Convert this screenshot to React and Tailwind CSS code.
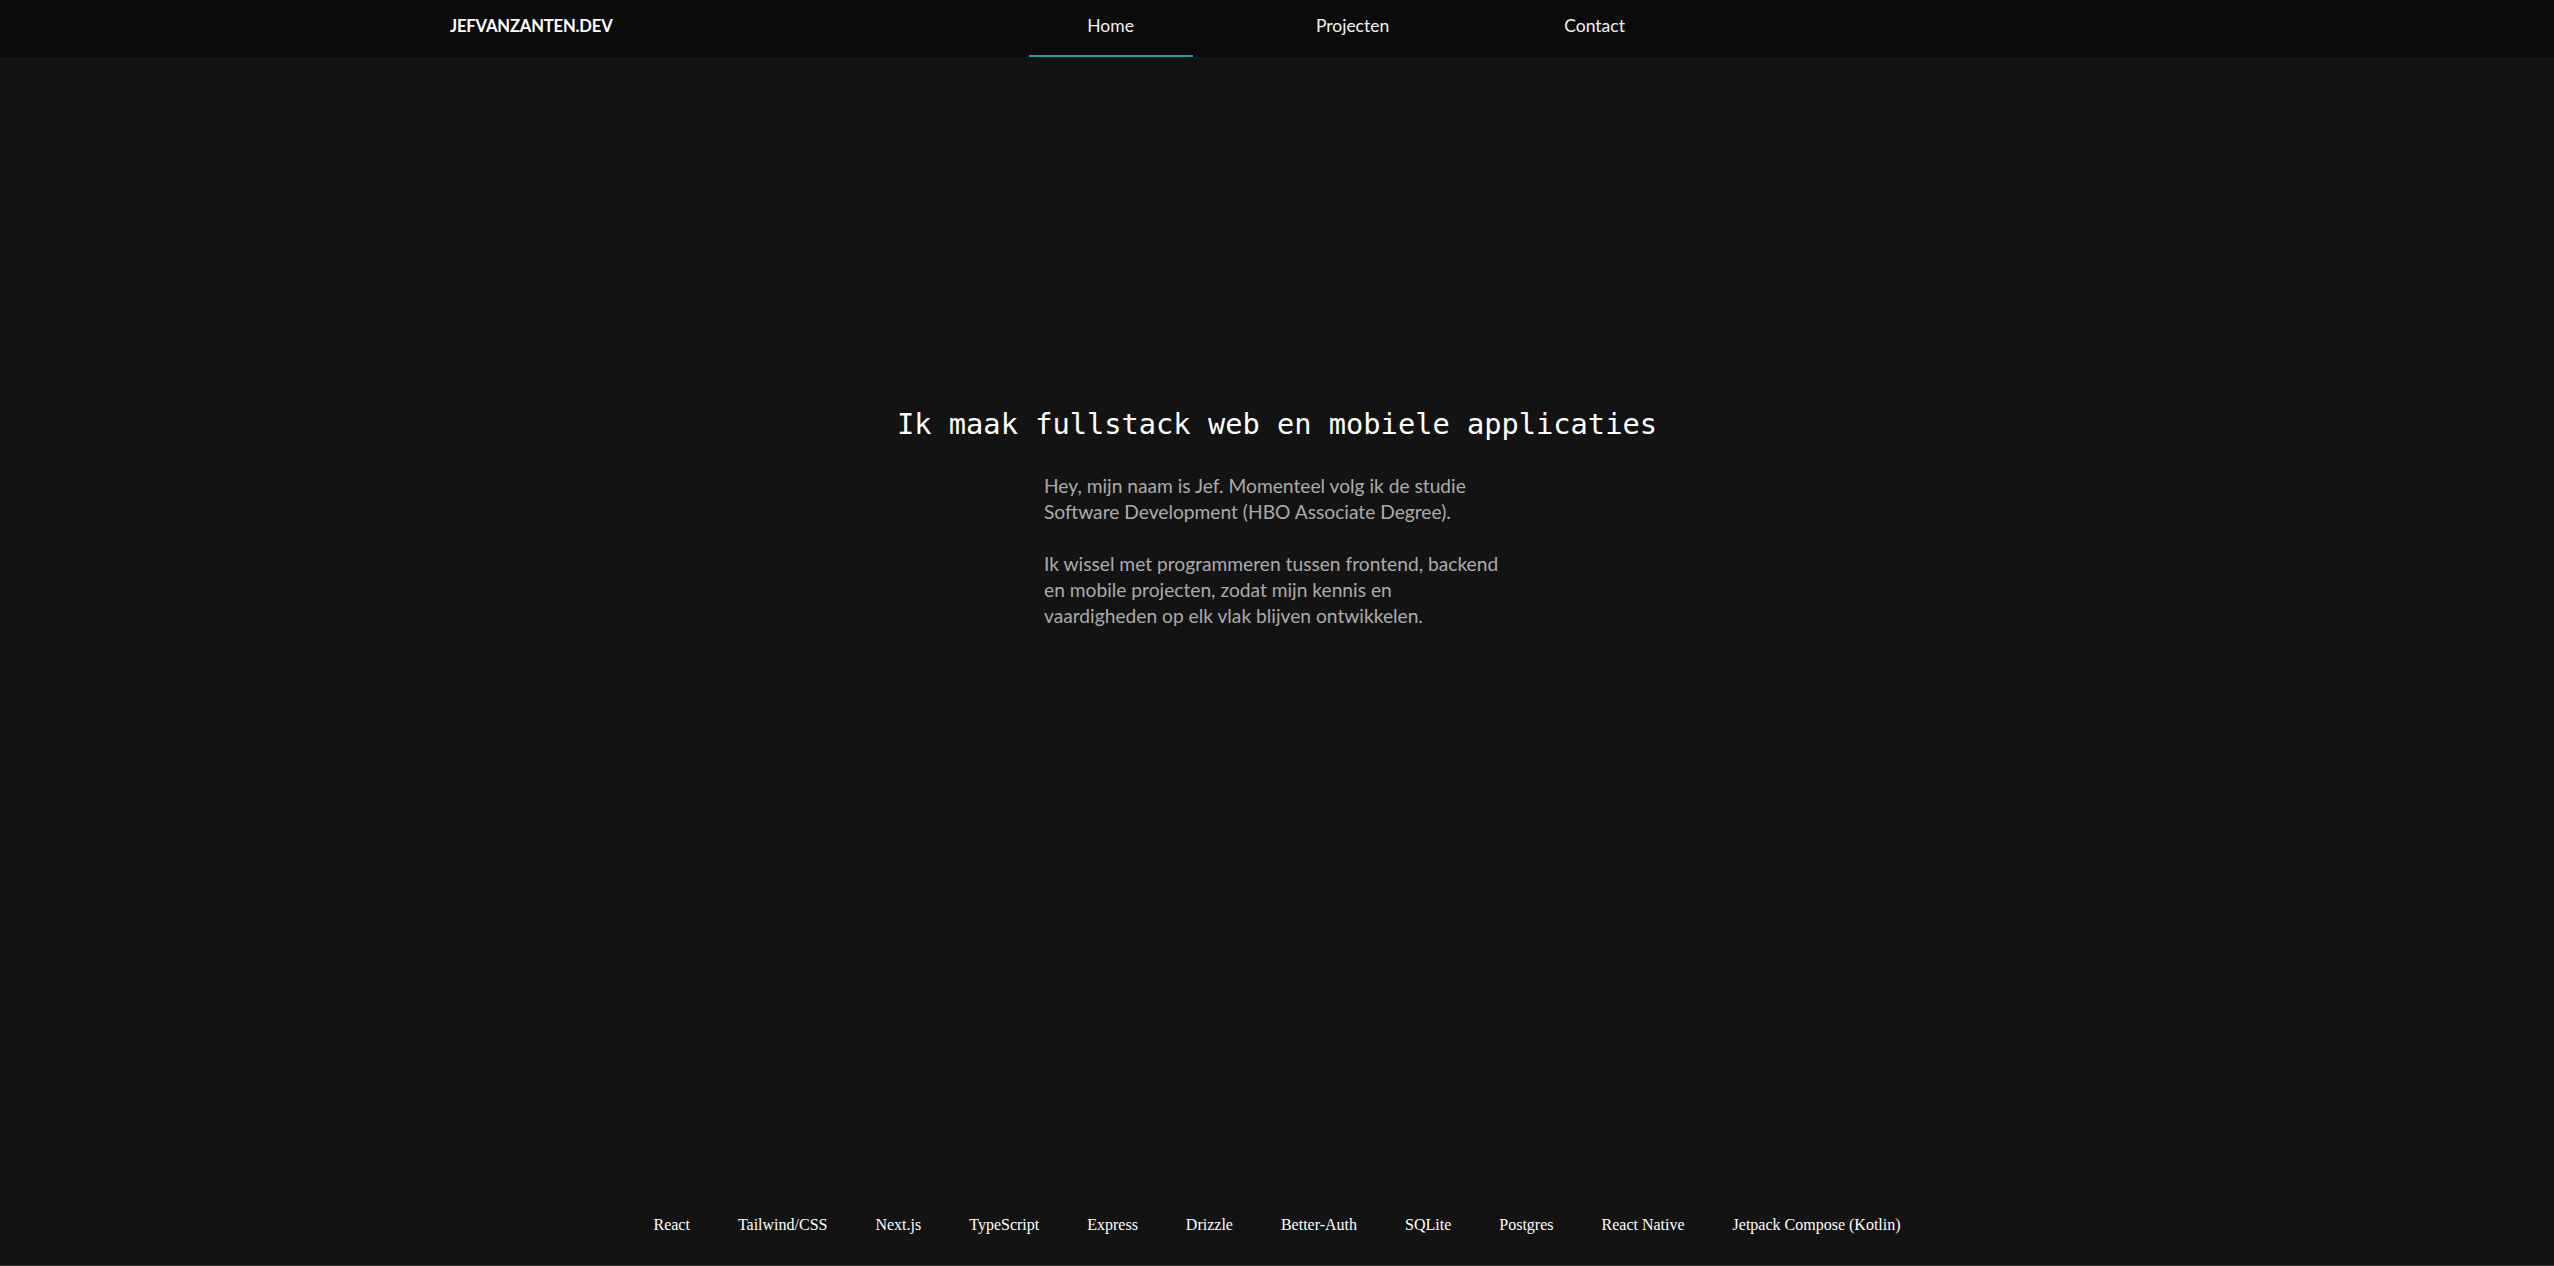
const NAV = ['Home', 'Projecten', 'Contact']

const STACK = [
  'React',
  'Tailwind/CSS',
  'Next.js',
  'TypeScript',
  'Express',
  'Drizzle',
  'Better-Auth',
  'SQLite',
  'Postgres',
  'React Native',
  'Jetpack Compose (Kotlin)',
]

function Header() {
  return (
    <header className="h-[57px] w-full shrink-0 bg-[#0b0b0b]">
      <div className="mx-auto flex h-full max-w-[1654px] items-stretch">
        <a href="#" className="flex items-center pb-[4px] font-['Lato',sans-serif] text-[16.6px] font-bold tracking-[-0.01em] text-white">
          JEFVANZANTEN.DEV
        </a>
        <nav className="ml-[416px] flex items-stretch gap-[78px]">
          {NAV.map((label, i) => (
            <a
              key={label}
              href="#"
              className={`flex w-[164px] items-center justify-center border-b-2 pb-[3px] font-['Lato',sans-serif] text-[17.5px] text-[#f2f2f2] ${
                i === 0 ? 'border-[#0ca6a6]' : 'border-transparent'
              }`}
            >
              {label}
            </a>
          ))}
        </nav>
      </div>
    </header>
  )
}

export default function App() {
  return (
    <div className="flex min-h-screen flex-col border-b border-[#3a3a3a] bg-[#131313]">
      <Header />

      <main className="flex flex-1 flex-col items-center pt-[349px]">
        <h1 className="font-['DejaVu_Sans_Mono',monospace] text-[28.7px] leading-9 text-white">
          Ik maak fullstack web en mobiele applicaties
        </h1>
        <div className="mt-[31px] w-[472px] translate-x-[3px] font-['Lato',sans-serif] text-[19.2px] leading-[26px] text-[#ababab]">
          <p>
            Hey, mijn naam is Jef. Momenteel volg ik de studie Software Development (HBO Associate Degree).
          </p>
          <p className="mt-[26px]">
            Ik wissel met programmeren tussen frontend, backend en mobile projecten, zodat mijn kennis en
            <br />
            vaardigheden op elk vlak blijven ontwikkelen.
          </p>
        </div>
      </main>

      <footer className="flex justify-center gap-12 pb-[28px] pt-6 font-['Liberation_Serif',serif] text-base leading-6 text-white">
        {STACK.map((item) => (
          <span key={item}>{item}</span>
        ))}
      </footer>
    </div>
  )
}
